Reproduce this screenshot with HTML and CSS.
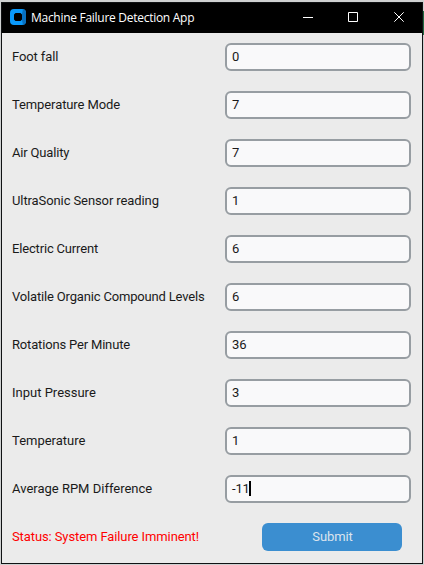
FILE: index.html
```html
<!DOCTYPE html>
<html lang="en">
<head>
<meta charset="utf-8">
<title>Machine Failure Detection App</title>
<link rel="stylesheet" href="styles.css">
</head>
<body>
<main class="window">
  <header class="titlebar">
    <svg class="logo" width="16" height="16" viewBox="0 0 16 16">
      <path fill="#0a99fa" fill-rule="evenodd" d="M4 0H12Q16 0 16 4V12Q16 16 12 16H4Q0 16 0 12V4Q0 0 4 0ZM5.500 4L4 5.500V10.500L5.500 12H10.500L12 10.500V5.500L10.500 4Z"/>
      <path fill="#0870c0" d="M13 0.100Q16 0.500 16 4V12Q16 15.500 13 15.900L12 11V5Z"/>
    </svg>
    <h1 class="title">Machine Failure Detection App</h1>
    <div class="controls">
      <svg width="46" height="30" viewBox="0 0 46 30"><path class="glyph" d="M18 14.500h10"/></svg>
      <svg width="46" height="30" viewBox="0 0 46 30"><path class="glyph" d="M17.500 9.500h9v9h-9z"/></svg>
      <svg width="46" height="30" viewBox="0 0 46 30"><path class="glyph" d="M17.300 9.300l9.400 9.400M26.700 9.300l-9.400 9.400"/></svg>
    </div>
  </header>
  <div class="form">
    <div class="row"><span class="label snug">Foot fall</span><div class="field">0</div></div>
    <div class="row"><span class="label snug">Temperature Mode</span><div class="field">7</div></div>
    <div class="row"><span class="label tight">Air Quality</span><div class="field">7</div></div>
    <div class="row"><span class="label snug">UltraSonic Sensor reading</span><div class="field">1</div></div>
    <div class="row"><span class="label tight">Electric Current</span><div class="field">6</div></div>
    <div class="row"><span class="label tight">Volatile Organic Compound Levels</span><div class="field">6</div></div>
    <div class="row"><span class="label tight">Rotations Per Minute</span><div class="field">36</div></div>
    <div class="row"><span class="label">Input Pressure</span><div class="field">3</div></div>
    <div class="row"><span class="label">Temperature</span><div class="field">1</div></div>
    <div class="row"><span class="label">Average RPM Difference</span><div class="field">-11<i class="caret"></i></div></div>
    <div class="row"><span class="label snug status">Status: System Failure Imminent!</span><button class="submit">Submit</button></div>
  </div>
</main>
</body>
</html>
```
FILE: styles.css
```css
* { box-sizing: border-box; }
body {
  margin: 0;
  height: 565px;
  padding: 2px 1px 1px;
  overflow: hidden;
  background: linear-gradient(90deg, transparent 50%, #216b43 50%) 0 11px / 100% 24px no-repeat, #cfd1d1;
  font-family: Roboto, "Liberation Sans", sans-serif;
  font-size: 13px;
  color: #1a1a1a;
}
.window {
  height: 562px;
  border: 1px solid #101214;
  background: #ebebeb;
}
.titlebar {
  display: flex;
  align-items: center;
  height: 30px;
  padding-left: 8px;
  background: #000;
}
.logo { display: block; margin-top: -2px; }
.title {
  margin: -1px 0 0 5px;
  font: 400 12px/16px "Open Sans", "Noto Sans", sans-serif;
  letter-spacing: -0.28px;
  white-space: nowrap;
  color: #fff;
}
.controls { display: flex; margin: 0 -1px 0 auto; }
.controls svg { display: block; }
.glyph { fill: none; stroke: #fff; stroke-width: 1; }
.form {
  display: grid;
  gap: 20px;
  padding: 10px 11px 0 10px;
}
.row {
  display: flex;
  align-items: center;
  justify-content: space-between;
  height: 28px;
  white-space: nowrap;
}
.label { padding-bottom: 2px; }
.tight { letter-spacing: -0.17px; }
.snug { letter-spacing: -0.1px; }
.field {
  display: flex;
  align-items: center;
  width: 186px;
  height: 28px;
  padding: 0 0 2px 5px;
  border: 2px solid #979da2;
  border-radius: 6px;
  background: #f9f9fa;
  letter-spacing: -0.15px;
}
.caret { width: 2px; height: 15px; margin: 0 0 -1px -1px; background: #000; }
.status { color: #f00; }
.submit {
  width: 140px;
  height: 28px;
  margin-right: 9px;
  padding: 0 0 2px 1px;
  border: 0;
  border-radius: 6px;
  background: #3b8ed0;
  color: #dce4ee;
  font: inherit;
  letter-spacing: -0.1px;
}
```
